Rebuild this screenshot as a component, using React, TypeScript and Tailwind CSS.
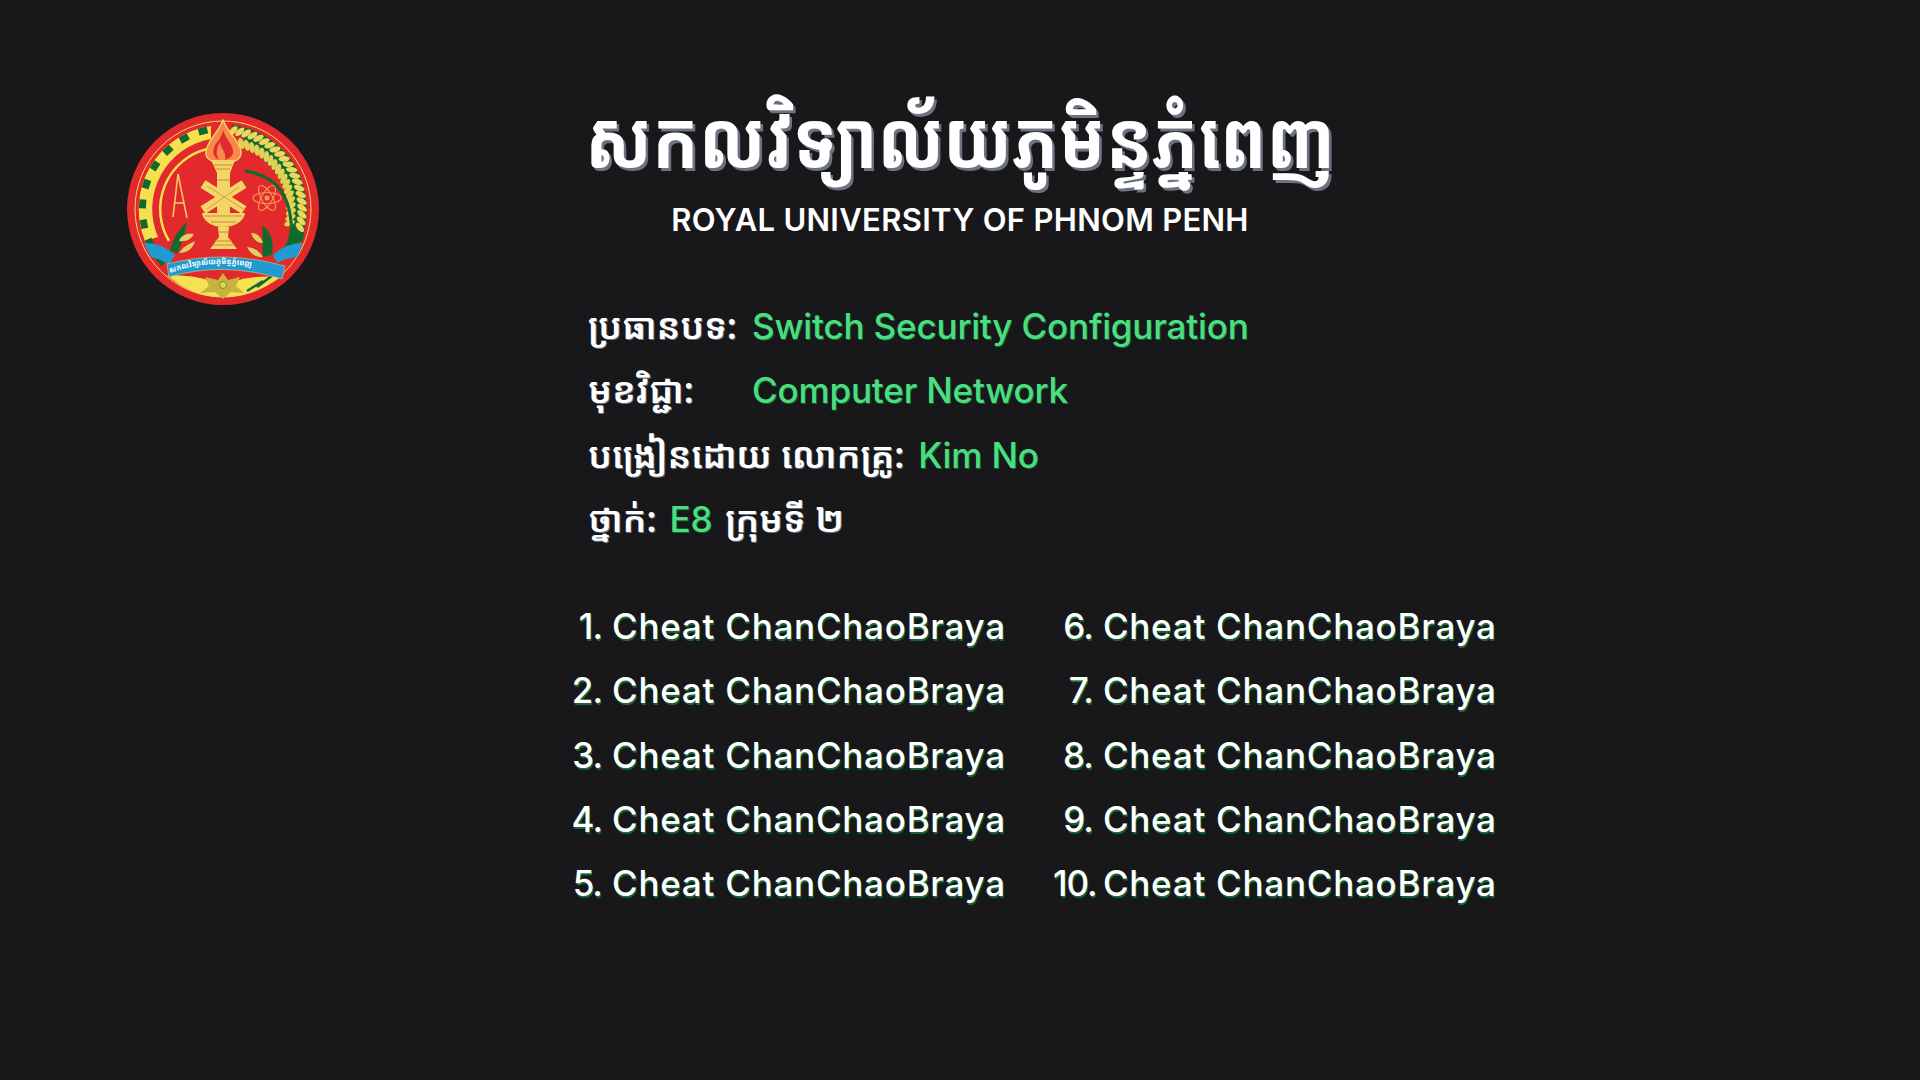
const KHMER = "font-['Noto_Sans_Khmer','Khmer_OS','Noto_Sans','DejaVu_Sans',sans-serif]";

const students = [
  ['1.', '6.'],
  ['2.', '7.'],
  ['3.', '8.'],
  ['4.', '9.'],
  ['5.', '10.'],
];

const GREEN = '#0f6a2c';
const GOLD = '#f4d668';
const BROWN = '#c58a32';

function Logo() {
  const teeth = [];
  for (let a = 14; a <= 158; a += 14.4) teeth.push(a);
  const grains = [];
  for (let a = 6; a <= 104; a += 4.8) grains.push(a);

  return (
    <svg viewBox="0 0 192 192" className="h-[192px] w-[192px] shrink-0">
      <defs>
        <path id="ribbon-text" d="M43 160 Q96 141 155 162" />
      </defs>
      <circle cx="96" cy="96" r="96" fill="#e22a2c" />
      <circle cx="96" cy="96" r="88" fill="none" stroke="#f8d66a" strokeWidth="1" />

      {/* gear */}
      <path d="M84 13 A84 84 0 0 0 18 128 L31 124 A71 71 0 0 1 84 26 Z" fill="#f7e04f" />
      {teeth.map((a) => (
        <rect key={a} x="91" y="12" width="9" height="7" fill={GREEN} transform={`rotate(${-a} 96 96)`} />
      ))}
      <path d="M80 36 A62 62 0 0 0 42 128" fill="none" stroke="#f7e04f" strokeWidth="2.5" />

      {/* wheat */}
      <path d="M104 12 A84 84 0 0 1 178 112 L176 128 L160 134 Q172 84 142 52 Q124 34 104 12 Z" fill={GREEN} />
      {grains.map((a) => (
        <g key={a} transform={`rotate(${a} 96 96)`}>
          <ellipse cx="98" cy="17" rx="2.8" ry="5.6" fill="#ecd85e" transform="rotate(38 98 17)" />
          {a > 14 && <ellipse cx="96" cy="28" rx="2.8" ry="5.6" fill="#e3d056" transform="rotate(-34 96 28)" />}
        </g>
      ))}
      <path d="M118 58 Q160 64 164 108 Q166 124 158 136" fill="none" stroke={GREEN} strokeWidth="3" />

      {/* flame and torch */}
      <path d="M96 7 C101 20 112 27 114 38 C115 44 110 48 106 49 L88 49 C82 48 78 44 79 38 C81 27 91 20 96 7 Z" fill="#f58a4a" stroke="#f7dd70" strokeWidth="1.2" />
      <path d="M96 17 C99 27 107 32 106 40 C105 44 101 46 98 47 C100 40 94 36 93 29 C90 34 88 40 92 47 C86 44 85 38 88 32 C91 28 95 24 96 17 Z" fill="#e22a2c" />
      <path d="M84 47 H108 L103 60 H90 Z" fill={GOLD} />
      <path d="M87 52 H105 M89 56 H103" stroke={BROWN} strokeWidth="1" />
      <rect x="90" y="60" width="13" height="44" fill={GOLD} />
      <path d="M90 67 H103" stroke={BROWN} strokeWidth="1" />

      {/* crossed tools */}
      <path d="M76 71 L117 97" stroke={GOLD} strokeWidth="9" />
      <path d="M117 71 L76 97" stroke={GOLD} strokeWidth="9" />
      <path d="M80 73 L118 97 M112 74 L80 96" stroke={BROWN} strokeWidth="0.7" />

      {/* chalice */}
      <path d="M75 100 H118 C117 108 108 114 96 114 C85 114 76 108 75 100 Z" fill={GOLD} />
      <path d="M78 103 H115 M84 109 H109" stroke={BROWN} strokeWidth="1" />
      <path d="M91 114 H102 L101 124 L110 136 H83 L92 124 Z" fill={GOLD} />
      <path d="M91 119 H102 M88 128 H105 M85 132 H108" stroke={BROWN} strokeWidth="1" />

      {/* compass */}
      <path d="M46 104 L51 61 L60 105 M48 90 H57" fill="none" stroke="#f7c46a" strokeWidth="1.6" />

      {/* atom */}
      <g fill="none" stroke="#f59a55" strokeWidth="1.1">
        <ellipse cx="140" cy="85" rx="14" ry="5.5" />
        <ellipse cx="140" cy="85" rx="14" ry="5.5" transform="rotate(60 140 85)" />
        <ellipse cx="140" cy="85" rx="14" ry="5.5" transform="rotate(120 140 85)" />
      </g>
      <circle cx="140" cy="85" r="2.5" fill="#f59a55" />

      {/* leaves */}
      <path d="M43 138 C46 126 50 118 60 109 C58 120 56 130 50 140 Z" fill={GREEN} />
      <path d="M52 128 C54 122 60 120 67 121 C64 126 60 129 52 128 Z M52 140 C56 134 60 132 68 128 C66 136 60 140 52 140 Z" fill="#e0cf63" />
      <path d="M145 142 C147 130 145 120 135 112 C137 124 134 132 136 144 Z" fill={GREEN} />
      <path d="M136 130 C134 124 130 120 124 120 C126 126 130 130 136 130 Z M136 144 C132 138 128 135 120 134 C123 141 130 145 136 144 Z" fill="#e0cf63" />

      {/* lower wreath */}
      <path d="M40 162 Q68 162 84 168 Q96 172 96 184 Q64 184 40 162 Z" fill="#f5e254" />
      <path d="M154 164 Q126 162 108 168 Q96 172 96 184 Q126 184 154 164 Z" fill="#f5e254" />
      <path d="M96 160 L101 167 L113 164 L109 173 L117 180 L104 179 L96 186 L88 179 L73 180 L82 173 L78 164 L91 167 Z" fill="#c9b23f" />
      <circle cx="96" cy="172" r="3.5" fill="#e9d44f" stroke="#7a8c2e" strokeWidth="1" />
      <path d="M130 174 L146 162 M120 178 L136 168" stroke={GREEN} strokeWidth="2.5" />

      {/* ribbon */}
      <path d="M17 130 Q36 130 48 142 L42 152 Q34 146 24 144 Z" fill="#1f9bd1" />
      <path d="M176 130 Q158 130 146 142 L150 150 Q160 145 170 144 Z" fill="#1f9bd1" />
      <path d="M40 151 Q96 136 158 153 L155 166 Q96 148 42 164 Z" fill="#1f9bd1" stroke="#f8e36a" strokeWidth="0.5" />
      <text className={KHMER} fontSize="7.6" fontWeight="700" fill="#ffffff">
        <textPath href="#ribbon-text">សកលវិទ្យាល័យភូមិន្ទភ្នំពេញ</textPath>
      </text>
    </svg>
  );
}

function Label({ children, className = '' }: { children: React.ReactNode; className?: string }) {
  return (
    <span className={`text-[36px] font-semibold text-white [text-shadow:1px_1px_0_#6b7280] ${KHMER} ${className}`}>
      {children}
    </span>
  );
}

function Value({ children, className = '' }: { children: React.ReactNode; className?: string }) {
  return (
    <span className={`text-[35px] font-medium tracking-[-0.15px] text-[#4ade80] [text-shadow:1px_1px_0_#166534] ${className}`}>
      {children}
    </span>
  );
}

function Student({ no }: { no: string }) {
  return (
    <div className="flex items-center gap-[10px]">
      <span className="w-[40px] text-right tracking-[-1px]">{no}</span>
      <span>Cheat ChanChaoBraya</span>
    </div>
  );
}

export default function App() {
  return (
    <div className="flex h-screen w-full items-start gap-[269px] bg-[#18181b] pt-[76px] pl-[127px] font-['Inter','Liberation_Sans',sans-serif]">
      <div className="pt-[37px]">
        <Logo />
      </div>

      <div className="flex flex-col items-start">
        <h1 className={`-ml-[3px] h-[122px] origin-left scale-x-[0.862] text-[80px] leading-[122px] font-bold whitespace-nowrap text-white [text-shadow:3px_3px_0_#6b7280] ${KHMER}`}>
          សកលវិទ្យាល័យភូមិន្ទភ្នំពេញ
        </h1>
        <p className="mt-[4px] h-[36px] w-[744px] text-center text-[31px] leading-[36px] font-semibold tracking-[0.3px] text-white">
          ROYAL UNIVERSITY OF PHNOM PENH
        </p>

        <div className="mt-[56px] flex flex-col leading-[64.3px]">
          <div className="flex">
            <Label className="w-[164px]">ប្រធានបទ:</Label>
            <Value>Switch Security Configuration</Value>
          </div>
          <div className="flex">
            <Label className="w-[164px]">មុខវិជ្ជា:</Label>
            <Value>Computer Network</Value>
          </div>
          <div className="flex gap-[14px]">
            <Label>បង្រៀនដោយ លោកគ្រូ:</Label>
            <Value>Kim No</Value>
          </div>
          <div className="flex gap-[13px]">
            <Label>ថ្នាក់:</Label>
            <Value>E8</Value>
            <Label>ក្រុមទី ២</Label>
          </div>
        </div>

        <div className="mt-[43px] -ml-[26px] flex flex-col text-[35px] leading-[64.3px] font-medium tracking-[0.75px] text-white [text-shadow:1px_2px_0_#166534]">
          {students.map(([a, b]) => (
            <div key={a} className="flex gap-[47px]">
              <Student no={a} />
              <Student no={b} />
            </div>
          ))}
        </div>
      </div>
    </div>
  );
}
